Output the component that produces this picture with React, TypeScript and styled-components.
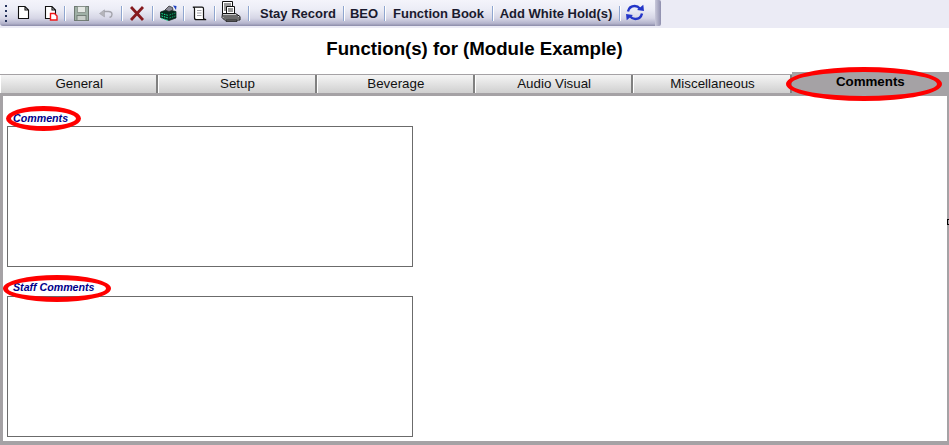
import React from 'react';
import styled, { createGlobalStyle } from 'styled-components';

const Global = createGlobalStyle`
  html, body { margin: 0; padding: 0; background: #fff; }
  body { font-family: "Liberation Sans", Arial, sans-serif; overflow: hidden; }
`;

const Page = styled.div`
  position: relative;
  width: 949px;
  height: 445px;
  overflow: hidden;
  background: #fff;
`;

const ToolbarBand = styled.div`
  height: 28px;
  background: #ebebf5;
  display: flex;
  align-items: flex-start;
`;

const Toolbar = styled.div`
  width: 655px;
  height: 26px;
  display: flex;
  align-items: center;
  padding-left: 5px;
  box-sizing: border-box;
  border-radius: 0 0 0 3px;
  background: linear-gradient(to bottom, #f4f4fb 0%, #ecedf6 35%, #d6d6e6 70%, #b4b4cc 90%, #8a8aa8 100%);
`;

const ToolbarEnd = styled.div`
  width: 6px;
  height: 26px;
  border-radius: 0 2px 2px 0;
  background: linear-gradient(to right, #c9c9db, #8f8fae);
`;

const Grip = styled.div`
  width: 2px;
  height: 17px;
  background: repeating-linear-gradient(to bottom, #25335c 0 2px, transparent 2px 5px);
`;

const IconSlot = styled.span<{ $w: number; $lift?: number }>`
  width: ${p => p.$w}px;
  height: 22px;
  flex: none;
  display: flex;
  align-items: center;
  justify-content: center;
  margin-top: ${p => (p.$lift ?? 0) * -1}px;
`;

const Sep = styled.span<{ $gap?: number }>`
  width: 1px;
  height: 15px;
  flex: none;
  margin: 0 ${p => p.$gap ?? 3}px;
  background: #8fa6cf;
  box-shadow: 1px 0 0 #fff;
`;

const ToolText = styled.span<{ $w: number }>`
  width: ${p => p.$w}px;
  flex: none;
  text-align: center;
  font-size: 13px;
  font-weight: bold;
  color: #1a1a2e;
  white-space: nowrap;
`;

const Title = styled.h1`
  margin: 0;
  height: 46px;
  line-height: 41px;
  font-size: 18.67px;
  font-weight: bold;
  text-align: center;
  color: #000;
`;

const TabBar = styled.div`
  height: 22px;
  display: flex;
  box-sizing: border-box;
  border-top: 1px solid #a5a2a5;
  border-bottom: 3px solid #a5a2a5;
`;

const Tab = styled.div`
  width: 158.33px;
  flex: none;
  box-sizing: border-box;
  padding-left: 1px;
  text-align: center;
  font-size: 13.33px;
  line-height: 18px;
  color: #111;
  border-right: 2px solid #808080;
  border-left: 1px solid #fff;
  background: linear-gradient(to bottom, #f4f4f4 0%, #e6e6e6 40%, #cfcfcf 100%);
`;

const ActiveTab = styled.div`
  flex: 1;
  margin-top: -3px;
  height: 21px;
  padding-bottom: 3px;
  background: #a5a2a5;
  text-align: center;
  font-size: 13.33px;
  font-weight: bold;
  line-height: 20px;
  color: #000;
`;

const Panel = styled.div`
  height: 349px;
  box-sizing: border-box;
  border-left: 3px solid #a5a2a5;
  border-right: 2px solid #a5a2a5;
  border-bottom: 4px solid #a5a2a5;
  padding: 15px 0 0 4px;
`;

const Field = styled.div`
  margin-bottom: 13px;
`;

const FieldLabel = styled.div<{ $h?: number }>`
  height: ${p => p.$h ?? 15}px;
  line-height: 14px;
  padding-left: 6px;
  font-size: 10.67px;
  font-weight: bold;
  font-style: italic;
  color: #00008b;
`;

const CommentBox = styled.textarea`
  display: block;
  width: 406px;
  height: 141px;
  box-sizing: border-box;
  margin: 0;
  padding: 0;
  resize: none;
  outline: none;
  background: #fff;
  border: 1px solid #6b6b6b;
`;

const RedRing = styled.div<{ $x: number; $y: number; $w: number; $h: number }>`
  position: absolute;
  left: ${p => p.$x}px;
  top: ${p => p.$y}px;
  width: ${p => p.$w}px;
  height: ${p => p.$h}px;
  box-sizing: border-box;
  border: 5px solid #f00;
  border-radius: 50%;
  pointer-events: none;
`;

const EdgeMark = styled.div`
  position: absolute;
  left: 947px;
  top: 219px;
  width: 2px;
  height: 6px;
  box-sizing: border-box;
  border: 1px solid #000;
  border-right: none;
`;

const NewDoc = ({ red }: { red?: boolean }) => (
  <svg width="14" height="16" viewBox="0 0 14 16">
    <path d="M1.500 1.500h6.500l3.500 3.500v8.500h-10z M8 1.500v3.500h3.500" fill="#fff" stroke="#111" strokeWidth="1.100" />
    {red && <path d="M6.500 8.500h4l2.500 2.500v4h-6.500z" fill="#fff" stroke="#f01818" strokeWidth="1.400" />}
  </svg>
);

const Save = () => (
  <svg width="15" height="15" viewBox="0 0 15 15">
    <rect x=".5" y=".5" width="14" height="14" fill="#9fb0a6" stroke="#6f7a73" />
    <rect x="3.500" y=".5" width="8" height="6" fill="#e4e8e4" stroke="#7d877f" strokeWidth=".7" />
    <rect x="3" y="9.500" width="9" height="5" fill="#c8cec9" stroke="#6f7a73" strokeWidth=".9" />
  </svg>
);

const Undo = () => (
  <svg width="14" height="9" viewBox="0 0 14 9">
    <path d="M4 2.500h5.500c2.500 0 3.500 1.500 3.500 3 0 1.300-.8 2.500-2.500 3" fill="none" stroke="#a4a4ac" strokeWidth="1.400" />
    <path d="M.5 4.500L5.500.8v7.200z" fill="#b4b4ba" stroke="#9a9aa2" strokeWidth=".5" />
  </svg>
);

const Cross = () => (
  <svg width="14" height="15" viewBox="0 0 14 15">
    <path d="M1 1l12 13M13 1L1 14" stroke="#861a1e" strokeWidth="2.800" />
  </svg>
);

const Cube = () => (
  <svg width="17" height="16" viewBox="0 0 17 16">
    <path d="M.5 7l7-2.500 8.500 2v6.500l-7 2.500-8.500-3z" fill="#06291d" stroke="#031f16" strokeWidth=".7" />
    <path d="M1.500 8.500l7 2M1.500 11l7 2M1.500 13.500l7 2" stroke="#14f09a" strokeWidth="1" strokeDasharray="1.500 1" />
    <path d="M9.500 10l6-2M9.500 13l6-2" stroke="#0fa868" strokeWidth="1" strokeDasharray="1.500 1" />
    <path d="M5 5l4-4 3.500 1.500L13 5 9 6.500z" fill="#8a8a96" stroke="#222" strokeWidth=".7" />
    <path d="M13 .5l3.500.5-.5 4z" fill="#1d3fc0" />
  </svg>
);

const Scroll = () => (
  <svg width="15" height="15" viewBox="0 0 15 15">
    <path d="M.8 1.200h9.200c1 0 1.500.6 1.500 1.500v9c0 1 .7 2 2.700 2H4.500c-1.200 0-2-.8-2-2V2.800C2.500 1.800 2 1.200.8 1.200z" fill="#fff" stroke="#111" strokeWidth="1.200" />
    <path d="M5 4.500h4.500M5 7h4.500M5 9.500h4.500" stroke="#a0a0a8" strokeWidth="1" />
  </svg>
);

const Printer = () => (
  <svg width="20" height="21" viewBox="0 0 20 21">
    <path d="M1.500 .5h10v12h-10z" fill="#fff" stroke="#111" />
    <path d="M3 3h7M3 5h7M3 7h7M3 9h7" stroke="#333" strokeWidth="1" />
    <path d="M5.500 5.500h8v7h-8z" fill="#fff" stroke="#111" />
    <path d="M7 8h5M7 10h5" stroke="#333" strokeWidth="1" />
    <path d="M1.500 12.500h13l4.500 3v3.500H3.500L1 16.500z" fill="#c9c9c9" stroke="#111" />
    <path d="M2 15h15M2.500 17h16" stroke="#111" strokeWidth="1" />
    <path d="M5 19h11v1.500H5z" fill="#777" stroke="#111" strokeWidth=".7" />
  </svg>
);

const Refresh = () => (
  <svg width="20" height="17" viewBox="0 0 20 17">
    <path d="M3 7.500C3.800 4 6.800 2 9.800 2c2 0 3.700.8 5 2.400" fill="none" stroke="#2436c8" strokeWidth="2.400" />
    <path d="M12 6l7 1L18.300 .8z" fill="#2436c8" />
    <path d="M17 9.500c-.8 3.500-3.800 5.500-6.800 5.500-2 0-3.700-.8-5-2.400" fill="none" stroke="#2436c8" strokeWidth="2.400" />
    <path d="M8 11L1 10l.7 6.200z" fill="#2436c8" />
  </svg>
);

const tabs = ['General', 'Setup', 'Beverage', 'Audio Visual', 'Miscellaneous'];

export default function App() {
  return (
    <Page>
      <Global />
      <ToolbarBand>
        <Toolbar>
          <Grip />
          <IconSlot $w={33}><NewDoc /></IconSlot>
          <IconSlot $w={21}><NewDoc red /></IconSlot>
          <Sep />
          <IconSlot $w={26}><Save /></IconSlot>
          <IconSlot $w={24}><Undo /></IconSlot>
          <Sep />
          <IconSlot $w={24}><Cross /></IconSlot>
          <Sep />
          <IconSlot $w={24}><Cube /></IconSlot>
          <Sep />
          <IconSlot $w={24}><Scroll /></IconSlot>
          <Sep />
          <IconSlot $w={26} $lift={3}><Printer /></IconSlot>
          <Sep $gap={4} />
          <ToolText $w={90}>Stay Record</ToolText>
          <Sep $gap={0} />
          <ToolText $w={40}>BEO</ToolText>
          <Sep $gap={0} />
          <ToolText $w={107}>Function Book</ToolText>
          <Sep $gap={0} />
          <ToolText $w={126}>Add White Hold(s)</ToolText>
          <Sep $gap={0} />
          <IconSlot $w={30} $lift={2}><Refresh /></IconSlot>
        </Toolbar>
        <ToolbarEnd />
      </ToolbarBand>
      <Title>Function(s) for (Module Example)</Title>
      <TabBar>
        {tabs.map(t => <Tab key={t}>{t}</Tab>)}
        <ActiveTab>Comments</ActiveTab>
      </TabBar>
      <Panel>
        <Field>
          <FieldLabel>Comments</FieldLabel>
          <CommentBox />
        </Field>
        <Field>
          <FieldLabel $h={16}>Staff Comments</FieldLabel>
          <CommentBox />
        </Field>
      </Panel>
      <RedRing $x={786} $y={67} $w={156} $h={34} />
      <RedRing $x={6} $y={106} $w={75} $h={25} />
      <RedRing $x={3} $y={275} $w={108} $h={27} />
      <EdgeMark />
    </Page>
  );
}
